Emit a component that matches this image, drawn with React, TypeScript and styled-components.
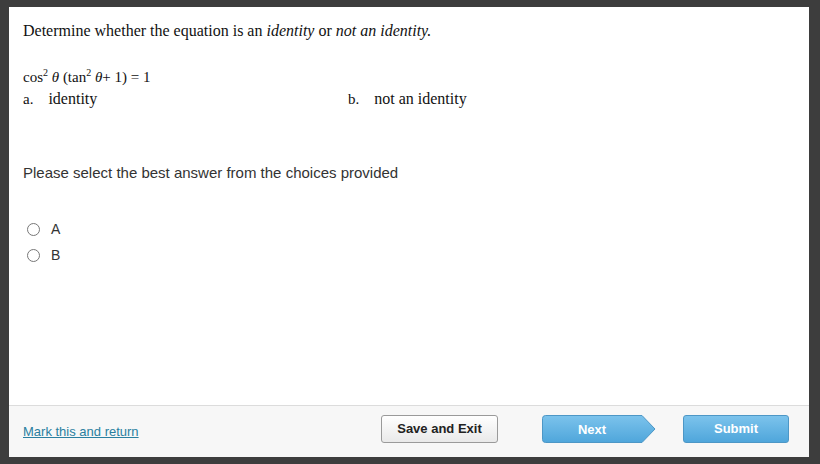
import React, { FC } from 'react';
import styled, { createGlobalStyle } from 'styled-components';

const Global = createGlobalStyle`
  html, body { margin: 0; padding: 0; background: #3d3d3d; }
  body { width: 820px; height: 464px; overflow: hidden; }
`;

const Frame = styled.div`
  width: 820px;
  height: 464px;
  box-sizing: border-box;
  padding: 7px 11px 7px 9px;
  background: #3d3d3d;
`;

const Panel = styled.div`
  display: flex;
  flex-direction: column;
  height: 100%;
  background: #fff;
`;

const Body = styled.div`
  flex: 1;
  padding: 15px 14px 0 14px;
`;

const Question = styled.div`
  font-family: 'Liberation Serif', 'Times New Roman', serif;
  font-size: 16px;
  color: #111;
`;

const Prompt = styled.p`
  margin: 0 0 28px 0;
  line-height: 18px;
`;

const Equation = styled.div`
  font-size: 15px;
  line-height: 18px;
  sup { font-size: 10px; vertical-align: 6px; line-height: 0; }
  i { font-style: italic; }
`;

const Choices = styled.div`
  display: grid;
  grid-template-columns: 325px 1fr;
  line-height: 18px;
  margin-top: 4px;
`;

const Choice = styled.div`
  display: flex;
  gap: 15px;
  span:first-child { font-size: 15px; }
`;

const Instruction = styled.p`
  margin: 56px 0 0 0;
  font-family: 'Liberation Sans', Arial, sans-serif;
  font-size: 15px;
  color: #333;
`;

const RadioList = styled.div`
  display: flex;
  flex-direction: column;
  gap: 8px;
  margin-top: 39px;
  padding-left: 4px;
`;

const RadioRow = styled.label`
  display: flex;
  align-items: center;
  gap: 11px;
  font-family: 'Liberation Sans', Arial, sans-serif;
  font-size: 14px;
  color: #333;
  height: 18px;
`;

const Circle = styled.span`
  width: 11px;
  height: 11px;
  border-radius: 50%;
  border: 1px solid #777;
  background: #fff;
`;

const Footer = styled.div`
  height: 52px;
  box-sizing: border-box;
  border-top: 1px solid #dcdcdc;
  background: #f7f7f7;
  display: flex;
  align-items: center;
  padding: 0 20px 6px 14px;
`;

const MarkLink = styled.a`
  font-family: 'Liberation Sans', Arial, sans-serif;
  font-size: 13px;
  color: #2a7fa0;
  text-decoration: underline;
  margin-top: 5px;
`;

const Spacer = styled.div`
  flex: 1;
`;

const Btn = styled.button<{ primary?: boolean; w: number }>`
  width: ${({ w }) => w}px;
  height: 28px;
  box-sizing: border-box;
  border-radius: 3px;
  font-family: 'Liberation Sans', Arial, sans-serif;
  font-weight: bold;
  font-size: 13px;
  cursor: pointer;
  border: 1px solid ${({ primary }) => (primary ? '#4d97c6' : '#9a9a9a')};
  color: ${({ primary }) => (primary ? '#fff' : '#222')};
  background: ${({ primary }) =>
    primary ? 'linear-gradient(#7cc3ec, #4fa6db)' : 'linear-gradient(#ffffff, #e9e9e9)'};
`;

const NextWrap = styled.div`
  position: relative;
  width: 114px;
  height: 28px;
  margin: 0 27px 0 44px;
`;

const NextLabel = styled.span`
  position: absolute;
  left: 0;
  width: 100px;
  top: 7px;
  text-align: center;
  font-family: 'Liberation Sans', Arial, sans-serif;
  font-weight: bold;
  font-size: 13px;
  color: #fff;
`;

const NextButton: FC = () => (
  <NextWrap>
    <svg width="114" height="28" viewBox="0 0 114 28">
      <defs>
        <linearGradient id="ng" x1="0" y1="0" x2="0" y2="1">
          <stop offset="0" stopColor="#7cc3ec" />
          <stop offset="1" stopColor="#4fa6db" />
        </linearGradient>
      </defs>
      <path
        d="M3.5 0.5 H100 L113 14 L100 27.5 H3.5 Q0.5 27.5 0.5 24.5 V3.5 Q0.5 0.5 3.5 0.5 Z"
        fill="url(#ng)"
        stroke="#4d97c6"
      />
    </svg>
    <NextLabel>Next</NextLabel>
  </NextWrap>
);

const App: FC = () => (
  <>
    <Global />
    <Frame>
      <Panel>
        <Body>
          <Question>
            <Prompt>
              Determine whether the equation is an <i>identity</i> or <i>not an identity.</i>
            </Prompt>
            <Equation>
              cos<sup>2</sup> <i>θ</i> (tan<sup>2</sup> <i>θ</i>+ 1) = 1
            </Equation>
            <Choices>
              <Choice>
                <span>a.</span>
                <span>identity</span>
              </Choice>
              <Choice>
                <span>b.</span>
                <span>not an identity</span>
              </Choice>
            </Choices>
          </Question>
          <Instruction>Please select the best answer from the choices provided</Instruction>
          <RadioList>
            <RadioRow>
              <Circle />A
            </RadioRow>
            <RadioRow>
              <Circle />B
            </RadioRow>
          </RadioList>
        </Body>
        <Footer>
          <MarkLink href="#">Mark this and return</MarkLink>
          <Spacer />
          <Btn w={117}>Save and Exit</Btn>
          <NextButton />
          <Btn primary w={106}>Submit</Btn>
        </Footer>
      </Panel>
    </Frame>
  </>
);

export default App;
